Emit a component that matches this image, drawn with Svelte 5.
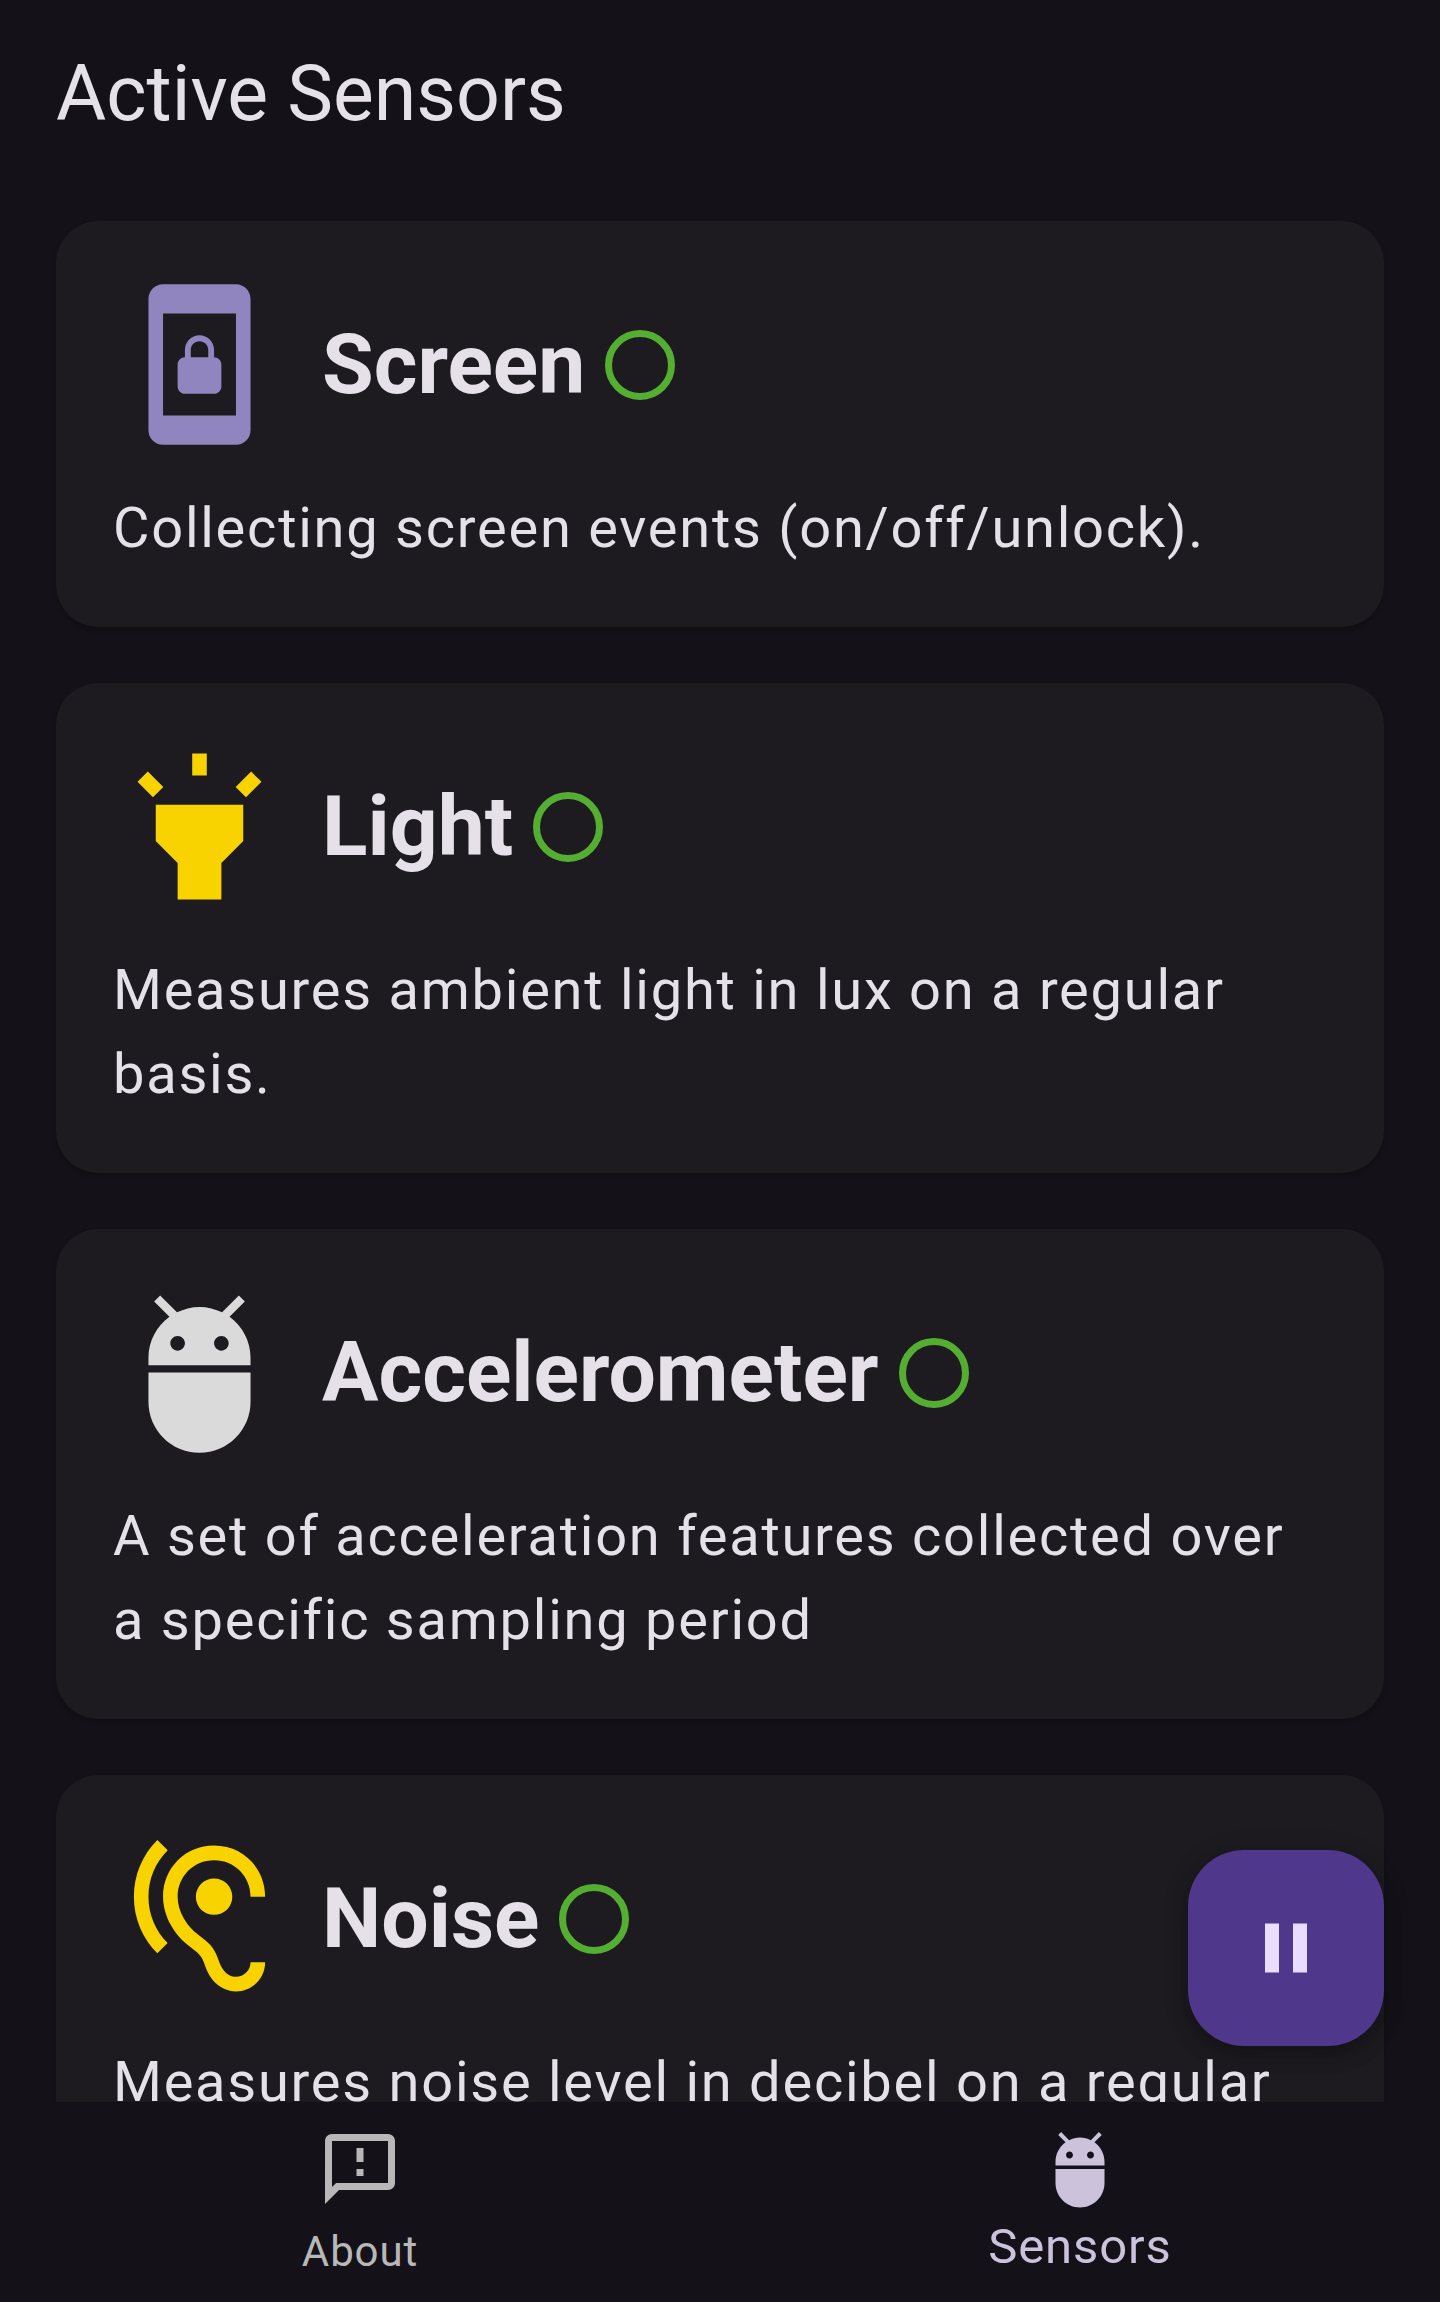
<script>
  const android =
    'M5 16c0 3.87 3.13 7 7 7s7-3.13 7-7v-4H5v4zM16.12 4.37l2.1-2.1-.82-.83-2.3 2.31C14.16 3.28 13.12 3 12 3s-2.12.28-3.09.75L6.6 1.44l-.82.83 2.1 2.1C6.14 5.64 5 7.68 5 10v1h14v-1c0-2.32-1.14-4.36-2.88-5.63zM9 9c-.55 0-1-.45-1-1s.45-1 1-1 1 .45 1 1-.45 1-1 1zm6 0c-.55 0-1-.45-1-1s.45-1 1-1 1 .45 1 1-.45 1-1 1z';

  const sensors = [
    {
      name: 'Screen',
      tone: 'violet',
      text: 'Collecting screen events (on/off/unlock).',
      icon: 'M17 1H7c-1.1 0-2 .9-2 2v18c0 1.1.9 2 2 2h10c1.1 0 2-.9 2-2V3c0-1.1-.9-2-2-2zm0 18H7V5h10v14zm-7-3h4c.55 0 1-.45 1-1v-3c0-.55-.45-1-1-1v-1c0-1.11-.9-2-2-2-1.11 0-2 .9-2 2v1c-.55 0-1 .45-1 1v3c0 .55.45 1 1 1zm.8-6c0-.66.54-1.2 1.2-1.2.67 0 1.2.54 1.2 1.2v1h-2.4v-1z'
    },
    {
      name: 'Light',
      tone: 'yellow',
      text: 'Measures ambient light in lux on a regular basis.',
      icon: 'M6 14l3 3v5h6v-5l3-3V9H6zM11 2h2v3h-2zM3.5 5.875L4.914 4.46l2.12 2.122L5.62 7.997zM16.96 6.585l2.123-2.12 1.414 1.414L18.375 8z'
    },
    {
      name: 'Accelerometer',
      tone: 'grey',
      text: 'A set of acceleration features collected over a specific sampling period',
      icon: android
    },
    {
      name: 'Noise',
      tone: 'yellow',
      text: 'Measures noise level in decibel on a regular',
      icon: 'M17 20c-.29 0-.56-.06-.76-.15-.71-.37-1.21-.88-1.71-2.38-.51-1.56-1.47-2.29-2.39-3-.79-.61-1.61-1.24-2.32-2.53C9.29 10.98 9 9.93 9 9c0-2.8 2.2-5 5-5s5 2.2 5 5h2c0-3.93-3.07-7-7-7S7 5.07 7 9c0 1.26.38 2.65 1.07 3.9.91 1.65 1.98 2.48 2.85 3.15.81.62 1.39 1.07 1.71 2.05.6 1.82 1.37 2.84 2.73 3.55.51.23 1.07.35 1.64.35 2.21 0 4-1.79 4-4h-2c0 1.1-.9 2-2 2zM7.64 2.64L6.22 1.22C4.23 3.21 3 5.96 3 9s1.23 5.79 3.22 7.78l1.41-1.41C6.01 13.74 5 11.49 5 9s1.01-4.74 2.64-6.36zM11.5 9c0 1.38 1.12 2.5 2.5 2.5s2.5-1.12 2.5-2.5-1.12-2.5-2.5-2.5-2.5 1.12-2.5 2.5z'
    }
  ];
</script>

<div class="app">
  <header><h1>Active Sensors</h1></header>

  <main>
    {#each sensors as sensor}
      <section class="card">
        <div class="head">
          <svg class="icon {sensor.tone}" viewBox="0 0 24 24"><path d={sensor.icon} /></svg>
          <h2>{sensor.name}</h2>
          <svg class="status" viewBox="0 0 24 24"><circle cx="12" cy="12" r="9" /></svg>
        </div>
        <p>{sensor.text}</p>
      </section>
    {/each}
  </main>

  <nav>
    <a class="about" href="#about">
      <svg viewBox="0 0 24 24"><path d="M20 2H4c-1.1 0-1.99.9-1.99 2L2 22l4-4h14c1.1 0 2-.9 2-2V4c0-1.1-.9-2-2-2zm0 14H5.17l-.59.59-.58.58V4h16v12zm-9-4h2v2h-2zm0-6h2v4h-2z" /></svg>
      <span>About</span>
    </a>
    <a class="active" href="#sensors">
      <svg viewBox="0 0 24 24"><path d={android} /></svg>
      <span>Sensors</span>
    </a>
  </nav>

  <button class="fab" aria-label="Pause">
    <svg viewBox="0 0 24 24"><path d="M6 19h4V5H6v14zm8-14v14h4V5h-4z" /></svg>
  </button>
</div>

<style>
  :global(body) {
    background: #141218;
  }
  .app {
    position: relative;
    display: flex;
    flex-direction: column;
    height: 2302px;
    overflow: hidden;
    background: #141218;
    color: #e6e0e9;
    font-family: Roboto, sans-serif;
  }
  h1, h2, p {
    margin: 0;
  }
  header {
    flex: none;
    height: 221px;
    padding: 0 56px;
  }
  h1 {
    padding-top: 45px;
    font-size: 77px;
    font-weight: 400;
    line-height: 98px;
  }
  main {
    flex: 1;
    min-height: 0;
    overflow: hidden;
    padding: 0 56px;
    display: flex;
    flex-direction: column;
    gap: 56px;
  }
  .card {
    flex: none;
    padding: 56px;
    border-radius: 42px;
    background: #1d1b20;
    box-shadow: 0 3px 4px rgba(0, 0, 0, 0.22);
  }
  .head {
    display: flex;
    align-items: center;
    height: 175px;
    margin-bottom: 34px;
  }
  .icon {
    width: 175px;
    height: 175px;
    margin-right: 35px;
  }
  .violet { fill: #9085be; }
  .yellow { fill: #f8d300; }
  .grey { fill: #dadada; }
  h2 {
    font-size: 84px;
    font-weight: 700;
    line-height: 98px;
  }
  .status {
    width: 84px;
    height: 84px;
    margin-left: 13px;
    fill: none;
    stroke: #53ae32;
    stroke-width: 2;
  }
  p {
    padding: 0 0 1px 1px;
    font-size: 56px;
    line-height: 84px;
    letter-spacing: 1.75px;
  }
  nav {
    flex: none;
    display: flex;
    height: 200px;
    background: #141218;
  }
  nav a {
    flex: 1;
    display: flex;
    flex-direction: column;
    align-items: center;
    padding-top: 25px;
    text-decoration: none;
    color: #b8b8b8;
    font-size: 42px;
    line-height: 58px;
    letter-spacing: 0.9px;
  }
  nav svg {
    width: 84px;
    height: 84px;
    fill: currentColor;
  }
  .about span {
    padding-top: 12px;
  }
  .active span {
    padding-top: 7px;
  }
  nav .active {
    color: #ccc2dc;
    font-size: 49px;
  }
  .fab {
    position: absolute;
    right: 56px;
    bottom: 256px;
    display: flex;
    align-items: center;
    justify-content: center;
    width: 196px;
    height: 196px;
    padding: 0;
    border: 0;
    border-radius: 56px;
    background: #4f378b;
    box-shadow: 0 10px 18px rgba(0, 0, 0, 0.22), 0 4px 28px rgba(0, 0, 0, 0.14);
  }
  .fab svg {
    width: 84px;
    height: 84px;
    fill: #eaddff;
  }
</style>
